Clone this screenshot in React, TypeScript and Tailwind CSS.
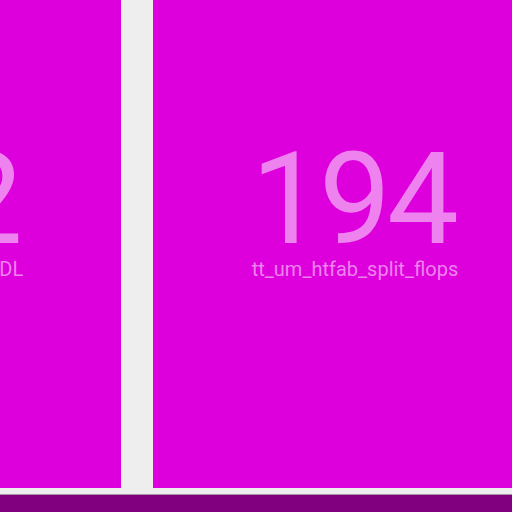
const cards = [
  { value: '132', label: 'tt_um_rejunity_lfsr_ADL' },
  { value: '194', label: 'tt_um_htfab_split_flops' },
];

function StatCard({ value, label }: { value: string; label: string }) {
  return (
    <div className="w-[404px] h-[488px] shrink-0 bg-[#dd00dd] flex flex-col items-center pt-[135px] text-[#ee82ee]">
      <div className="text-[128px] leading-none tracking-[-4px] pr-[4px]">{value}</div>
      <div className="text-[20px] leading-none -mt-[4px]">{label}</div>
    </div>
  );
}

export default function App() {
  return (
    <div
      className="w-[512px] h-[512px] overflow-hidden bg-[#eeeeee] flex flex-col"
      style={{ fontFamily: 'Roboto, "Noto Sans", sans-serif' }}
    >
      <div className="flex gap-8 -ml-[283px]">
        {cards.map((c) => (
          <StatCard key={c.label} value={c.value} label={c.label} />
        ))}
      </div>
      <div className="h-[6px]" />
      <div className="flex-1 bg-[#800080] border-t border-[#a890a8]" />
    </div>
  );
}
